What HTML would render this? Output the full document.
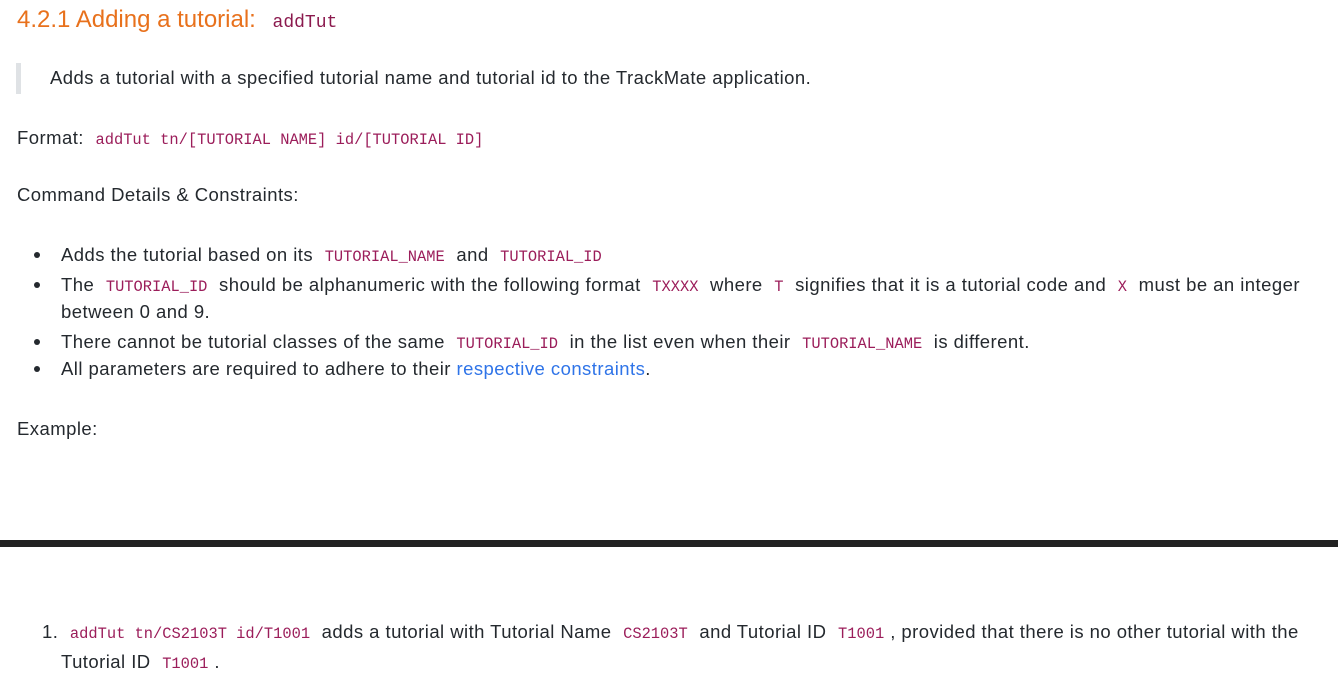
<!DOCTYPE html>
<html><head><meta charset="utf-8"><style>
body{margin:0;width:1338px;height:696px;background:#fff;font-family:"Liberation Sans",sans-serif;color:#24292e;font-size:18.5px;letter-spacing:0.45px;position:relative;overflow:hidden}
.a{position:absolute;white-space:nowrap;line-height:20px}
code{font-family:"Liberation Mono",monospace;font-size:15.4px;letter-spacing:0;color:#9b1d5a;padding:0 6px}
h1{position:absolute;left:17px;top:6px;margin:0;font-weight:normal;font-size:24px;letter-spacing:0;color:#e8711c;white-space:nowrap}
h1 code{font-size:18px;color:#8b1a4e;padding:0 10px}
.dot{position:absolute;left:34px;width:6px;height:6px;border-radius:50%;background:#24292e}
a{color:#2f74e8;text-decoration:none}
</style></head><body>
<h1>4.2.1 Adding a tutorial: <code>addTut</code></h1>
<div style="position:absolute;left:16px;top:63px;width:5px;height:31px;background:#dfe2e5"></div>
<div class="a" style="left:50px;top:68px">Adds a tutorial with a specified tutorial name and tutorial id to the TrackMate application.</div>
<div class="a" style="left:17px;top:128px">Format: <code>addTut tn/[TUTORIAL NAME] id/[TUTORIAL ID]</code></div>
<div class="a" style="left:17px;top:185px">Command Details &amp; Constraints:</div>
<div class="dot" style="top:252px"></div>
<div class="a" style="left:61px;top:245px">Adds the tutorial based on its <code>TUTORIAL_NAME</code> and <code>TUTORIAL_ID</code></div>
<div class="dot" style="top:282px"></div>
<div class="a" style="left:61px;top:275px">The <code>TUTORIAL_ID</code> should be alphanumeric with the following format <code>TXXXX</code> where <code>T</code> signifies that it is a tutorial code and <code>X</code> must be an integer</div>
<div class="a" style="left:61px;top:302px">between 0 and 9.</div>
<div class="dot" style="top:339px"></div>
<div class="a" style="left:61px;top:332px">There cannot be tutorial classes of the same <code>TUTORIAL_ID</code> in the list even when their <code>TUTORIAL_NAME</code> is different.</div>
<div class="dot" style="top:366px"></div>
<div class="a" style="left:61px;top:359px">All parameters are required to adhere to their <a>respective constraints</a>.</div>
<div class="a" style="left:17px;top:419px">Example:</div>
<div style="position:absolute;left:0;top:540px;width:1338px;height:7px;background:#222"></div>
<div class="a" style="left:42px;top:622px">1. <code>addTut tn/CS2103T id/T1001</code> adds a tutorial with Tutorial Name <code>CS2103T</code> and Tutorial ID <code>T1001</code>, provided that there is no other tutorial with the</div>
<div class="a" style="left:61px;top:652px">Tutorial ID <code>T1001</code>.</div>
</body></html>
